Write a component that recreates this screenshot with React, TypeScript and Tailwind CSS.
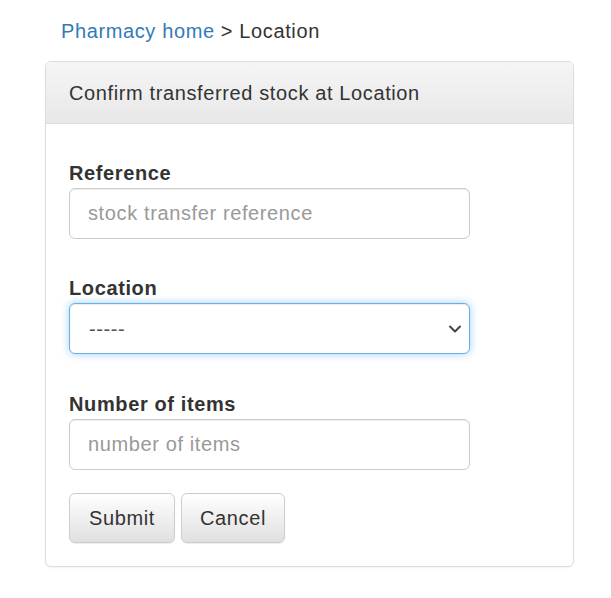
import React from "react";

export default function App() {
  const font = { fontFamily: '"Liberation Sans", Arial, sans-serif', letterSpacing: "0.62px" };
  return (
    <div className="min-h-[598px] bg-white text-[#333]" style={font}>
      <div className="pl-[45px] pr-[37px] pt-[17px]">
        <div className="pl-[16px] text-[20px] leading-[28px] h-[28px]">
          <a href="#" className="text-[#337ab7]">Pharmacy home</a>
          <span> &gt; Location</span>
        </div>
        <div className="mt-[16px] border border-[#ddd] rounded-[6px] bg-white shadow-[0_1px_2px_rgba(0,0,0,0.05)]">
          <div className="h-[62px] flex items-center px-[23px] border-b border-[#ddd] rounded-t-[5px] bg-gradient-to-b from-[#f5f5f5] to-[#e8e8e8] text-[20px]">
            Confirm transferred stock at Location
          </div>
          <div className="px-[23px] pt-[35px] pb-[23px]">
            <div className="w-[401px]">
              <label className="block font-bold text-[20px] leading-[28px] mb-[1px]">Reference</label>
              <input
                type="text"
                placeholder="stock transfer reference"
                className="block w-full h-[51px] px-[18px] border border-[#ccc] rounded-[6px] text-[20px] text-[#555] placeholder:text-[#999] shadow-[inset_0_1px_1px_rgba(0,0,0,0.075)] outline-none"
                style={font}
              />
              <label className="block mt-[35px] font-bold text-[20px] leading-[28px] mb-[1px]">Location</label>
              <div className="relative h-[51px] border border-[#66afe9] rounded-[6px] bg-white shadow-[inset_0_1px_1px_rgba(0,0,0,0.075),0_0_8px_rgba(102,175,233,0.6)] flex items-center px-[19px] text-[20px] text-[#555]">
                <span>-----</span>
                <svg className="absolute right-[6px] top-[17px]" width="16" height="16" viewBox="0 0 16 16" fill="none">
                  <path d="M3 5.5 L8 10.5 L13 5.5" stroke="#444" strokeWidth="2" strokeLinecap="round" strokeLinejoin="round" />
                </svg>
              </div>
              <label className="block mt-[36px] font-bold text-[20px] leading-[28px] mb-[1px]">Number of items</label>
              <input
                type="text"
                placeholder="number of items"
                className="block w-full h-[51px] px-[18px] border border-[#ccc] rounded-[6px] text-[20px] text-[#555] placeholder:text-[#999] shadow-[inset_0_1px_1px_rgba(0,0,0,0.075)] outline-none"
                style={font}
              />
              <div className="mt-[23px] flex gap-[6px]">
                <button
                  className="h-[50px] w-[106px] border border-[#ccc] rounded-[6px] bg-gradient-to-b from-white to-[#e0e0e0] text-[20px] text-[#333] shadow-[inset_0_1px_0_rgba(255,255,255,0.15),0_1px_1px_rgba(0,0,0,0.075)]"
                  style={font}
                >
                  Submit
                </button>
                <button
                  className="h-[50px] w-[104px] border border-[#ccc] rounded-[6px] bg-gradient-to-b from-white to-[#e0e0e0] text-[20px] text-[#333] shadow-[inset_0_1px_0_rgba(255,255,255,0.15),0_1px_1px_rgba(0,0,0,0.075)]"
                  style={font}
                >
                  Cancel
                </button>
              </div>
            </div>
          </div>
        </div>
      </div>
    </div>
  );
}
